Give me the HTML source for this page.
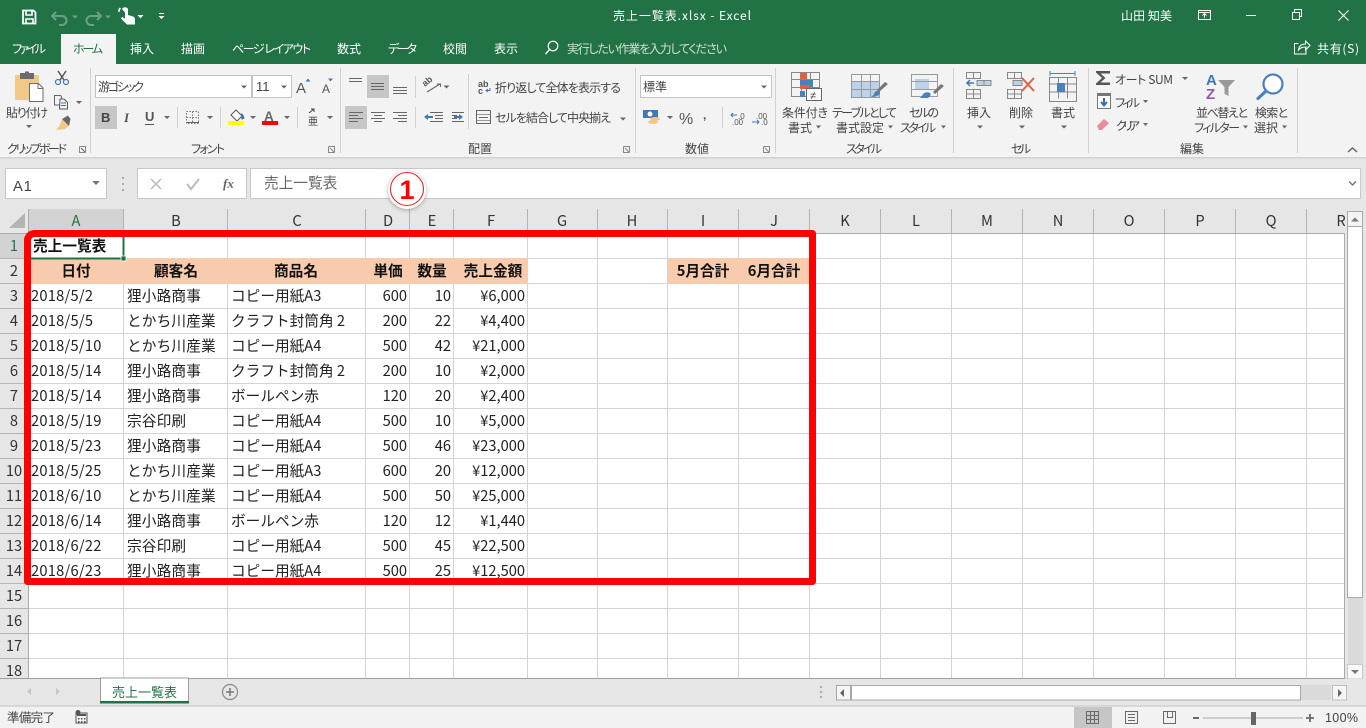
<!DOCTYPE html>
<html lang="ja"><head><meta charset="utf-8"><title>売上一覧表.xlsx - Excel</title>
<style>
html,body{margin:0;padding:0;width:1366px;height:728px;overflow:hidden;background:#e6e6e6}
svg{display:block;position:absolute;left:0;top:0}
text{font-family:"Liberation Sans","Noto Sans CJK JP",sans-serif;font-size:12px;fill:#444}
.j text,text.j{font-family:"Noto Sans CJK JP","Liberation Sans",sans-serif;font-feature-settings:"palt"}
.w text{fill:#fff}
.c text{font-family:"Noto Sans CJK JP","Liberation Sans",sans-serif;font-size:14.67px;fill:#222}
.c text[x="31"]{letter-spacing:.25px}
.c text[x="127"]{letter-spacing:.15px}
.b text{font-weight:700;text-anchor:middle;fill:#111}
.r text{text-anchor:end}
.h text{font-family:"Noto Sans CJK JP",sans-serif;font-size:14.67px;fill:#333;text-anchor:middle}
</style></head><body>
<svg width="1366" height="728" viewBox="0 0 1366 728" xmlns="http://www.w3.org/2000/svg">
<!-- base -->
<rect width="1366" height="728" fill="#e6e6e6"/>
<rect width="1366" height="64" fill="#217346"/>
<rect y="64" width="1366" height="93" fill="#f3f3f3"/>
<rect y="157" width="1366" height="1.5" fill="#d2d2d2"/>
<rect x="61" y="34" width="55" height="30" fill="#f3f3f3"/>

<!-- title bar -->
<g class="j w">
<text x="613" y="20" textLength="138">売上一覧表.xlsx  -  Excel</text>
<text x="1121" y="20" textLength="51">山田 知美</text>
<text x="12" y="53" textLength="34">ファイル</text>
<text x="130" y="53" textLength="24">挿入</text>
<text x="181" y="53" textLength="24">描画</text>
<text x="232" y="53" textLength="79">ページ レイアウト</text>
<text x="337" y="53" textLength="24">数式</text>
<text x="388" y="53" textLength="29">データ</text>
<text x="443" y="53" textLength="24">校閲</text>
<text x="494" y="53" textLength="24">表示</text>
<text x="567" y="53" textLength="160" style="fill:#cfe0d6">実行したい作業を入力してください</text>
<text x="1317" y="53" textLength="42">共有(S)</text>
</g>
<text class="j" x="73" y="53" textLength="30" style="fill:#217346">ホーム</text>

<!-- QAT -->
<g fill="none" stroke="#fff">
<path d="M23 10.500h10.500l2 2v11h-12.500z" stroke-width="1.800"/>
<path d="M26 11v4h6v-4M26 23.500v-4.500h7v4.500" stroke-width="1.600"/>
<path d="M53 16h9a4.500 4.500 0 0 1 0 9h-3M56 12l-4 4 4 4" stroke="#6aa184" stroke-width="2"/>
<path d="M100 16h-9a4.500 4.500 0 0 0 0 9h3M97 12l4 4-4 4" stroke="#6aa184" stroke-width="2"/>
</g>
<path d="M122 9a3.500 3.500 0 0 1 6 0v6l5 1.500c1.500.5 2 1.500 2 3v5h-8l-6-6 1-1.500 3 1.500v-6z M118.500 12a4 4 0 0 1 1.500-4.500l1 1.300a2.500 2.500 0 0 0-1 3z" fill="#fff"/>
<path d="M72 15.500h6l-3 3zM105 15.500h6l-3 3z" fill="#6aa184"/>
<path d="M137.500 15h6l-3 3.500z M159 13h5v1h-5z M158.500 16h6l-3 3z" fill="#fff"/>

<!-- window buttons -->
<g fill="none" stroke="#fff" stroke-width="1">
<path d="M1198.500 10.500h12v9h-12zM1198.500 12.500h12M1204.500 18v-4.500M1202.500 15.500l2-2 2 2"/>
<path d="M1246 15.500h10"/>
<path d="M1292.500 12.500h7v7h-7zM1294.500 12v-2.500h7v7h-2"/>
<path d="M1338.500 10.500l10 10M1348.500 10.500l-10 10" stroke-width="1.100"/>
<circle cx="553" cy="46" r="4.800" stroke-width="1.200"/>
<path d="M549.500 49.500l-4 4.500" stroke-width="1.400"/>
<path d="M1306 46.500v7.500h-11.500v-10.500h4M1298.500 50c.5-4 3-6 7-6v-3l4.500 4.500-4.500 4.500v-3c-3 0-5.500 1-7 3z"/>
</g>

<!-- ribbon separators -->
<g fill="none" stroke="#d0d0d0">
<path d="M90.500 68v85M340.500 68v85M635.500 68v85M775.500 68v85M953.500 68v85M1088.500 68v85M1297.500 68v85"/>
<path d="M415.500 76v22M415.500 107v21M468.500 74v55M177.500 107v21M220.500 107v21M297.500 107v21M722.500 107v21"/>
</g>

<!-- clipboard -->
<rect x="15" y="75" width="24" height="25" rx="1" fill="#f0c986"/>
<rect x="20" y="73" width="14" height="6" fill="#6b6b6b"/>
<rect x="25" y="71.500" width="4" height="3" fill="#6b6b6b"/>
<path d="M29.500 83.500h9l4.500 4.500v13.500h-13.500z" fill="#fff" stroke="#6b6b6b"/>
<path d="M38 83.500v5h5" fill="none" stroke="#6b6b6b"/>
<g fill="none" stroke="#555" stroke-width="1.200">
<path d="M58 71l6 9M66 71l-6 9" stroke-width="1.500"/>
<circle cx="58" cy="82" r="2.500" stroke="#3f78b5"/><circle cx="66" cy="82" r="2.500" stroke="#3f78b5"/>
<path d="M54.500 95.500h6l1 1v3h3l3 3v6.500h-8v-4h-5z" stroke="#666" stroke-width="1"/>
<path d="M60 99h4l3.500 3.500v6.500h-8z" fill="#f3f3f3" stroke="#5a5a5a" stroke-width="1"/>
<path d="M61 103h5M61 105.500h5" stroke="#3f78b5" stroke-width="1"/>
</g>
<path d="M62 119l7 7-3 2.500c-2 1-6 1.500-10.500 1 2-1 3.500-3 4-4z" fill="#f0c986"/>
<path d="M62 119l6-3.500 2.500 3.500-1.500 7z" fill="#666"/>
<path d="M76 101h6l-3 3zM26 125h6l-3 3z" fill="#666"/>
<text class="j" x="6" y="117" textLength="42">貼り付け</text>
<text class="j" x="7" y="153" textLength="60">クリップボード</text>
<g fill="none" stroke="#888"><path d="M79.500 146.500h6v6M79.500 146.500v6h6"/><path d="M81 148l4 4" stroke="#666"/>
<path d="M328.500 146.500h6v6M328.500 146.500v6h6M330 148l4 4"/><path d="M623.500 146.500h6v6M623.500 146.500v6h6M625 148l4 4"/><path d="M763.500 146.500h6v6M763.500 146.500v6h6M765 148l4 4"/></g>

<!-- font group -->
<rect x="95.500" y="75.500" width="156" height="22" fill="#fff" stroke="#c2c2c2"/>
<rect x="252.500" y="75.500" width="39" height="22" fill="#fff" stroke="#c2c2c2"/>
<text class="j" x="98" y="91" textLength="46">游ゴシック</text>
<text x="256" y="91" style="font-size:13px">11</text>
<path d="M241 85.500h6l-3 3zM281 85.500h6l-3 3z" fill="#666"/>
<text x="296" y="93" style="font-size:15px;fill:#555">A</text><text x="322" y="93" style="font-size:12px;fill:#555">A</text>
<path d="M305.500 81.500h5l-2.500-3zM328 78.500h5l-2.500 3z" fill="#3f78b5"/>
<rect x="95" y="106" width="22" height="23" fill="#c6c6c6"/>
<text x="101" y="122" style="font-size:13px;font-weight:700;fill:#444">B</text>
<text x="124" y="122" style="font-size:13px;font-style:italic;font-family:'Liberation Serif',serif;font-weight:700;fill:#555">I</text>
<text x="145" y="121" style="font-size:13px;font-weight:700;fill:#555">U</text><path d="M145 124.500h9" stroke="#555"/>
<g fill="#666"><path d="M164 116h6l-3 3zM207 116h6l-3 3zM250 116h6l-3 3zM284 116h6l-3 3zM327 116h6l-3 3z"/></g>
<g fill="none" stroke="#777" stroke-dasharray="1.500 1.500"><path d="M186.500 111.500h12v12h-12zM192.500 111.500v12M186.500 117.500h12"/></g>
<path d="M186 122.500h13" stroke="#666"/>
<path d="M236 110l6 6-5 5-6-6z M242 114l2 4-2 1z" fill="#fff" stroke="#555"/>
<path d="M241 113l3 3 0 3-3-1z" fill="#3f78b5"/>
<rect x="228" y="121" width="16" height="4" fill="#ffff00"/>
<text x="264" y="121" style="font-size:13.500px;font-weight:700;fill:#666">A</text>
<rect x="262" y="121" width="16" height="4" fill="#f00"/>
<text class="j" x="308" y="125" style="font-size:10px;fill:#444">亜</text>
<path d="M309 113l5-4M311 109h3v3" stroke="#444" fill="none"/>
<text class="j" x="191" y="153" textLength="34">フォント</text>

<!-- alignment -->
<rect x="367" y="75" width="22" height="23" fill="#c6c6c6"/>
<rect x="345" y="106" width="22" height="23" fill="#c6c6c6"/>
<g fill="none" stroke="#666">
<path d="M349 78.500h13M349 81.500h13M371 83.500h13M371 86.500h13M371 89.500h13M393 87.500h14M393 90.500h14M393 93.500h14"/>
<path d="M349 112.500h14M349 115.500h9M349 118.500h14M349 121.500h9"/>
<path d="M371 112.500h14M374 115.500h8M371 118.500h14M374 121.500h8"/>
<path d="M393 112.500h14M398 115.500h9M393 118.500h14M398 121.500h9"/>
<path d="M430 112.500h13M435 115.500h8M435 118.500h8M430 121.500h13M452 112.500h12M452 115.500h5M452 118.500h5M452 121.500h12"/>
<path d="M427 92l13-8M437 84h3.500v3" stroke-width="1.100"/>
</g>
<text x="425" y="87" transform="rotate(-40 425 87)" style="font-size:9px;font-weight:700;fill:#555">ab</text>
<path d="M424 117l4-3v2h5v2h-5v2zM463 117l-4-3v2h-5v2h5v2z" fill="#3f78b5"/>
<path d="M443.500 85.500h6l-3 3zM620 117.500h6l-3 3z" fill="#666"/>
<text x="478" y="87" style="font-size:9px;fill:#555;font-weight:700">ab</text><text x="478" y="94" style="font-size:9px;fill:#555;font-weight:700">c</text>
<path d="M490 88v2.500h-3M488 89l-2 1.500 2 1.500" fill="none" stroke="#3f78b5"/>
<text class="j" x="495" y="92" textLength="126">折り返して全体を表示する</text>
<rect x="476.500" y="110.500" width="14" height="13" fill="none" stroke="#666"/>
<path d="M477 114.500h13M477 120.500h13" stroke="#999"/>
<path d="M479 117.500h9" stroke="#3f78b5"/>
<text class="j" x="495" y="122" textLength="116">セルを結合して中央揃え</text>
<text class="j" x="468" y="153" textLength="24">配置</text>

<!-- number -->
<rect x="640.500" y="75.500" width="131" height="22" fill="#fff" stroke="#c2c2c2"/>
<text class="j" x="643" y="91" textLength="24">標準</text>
<path d="M761 85.500h6l-3 3zM667 116h6l-3 3z" fill="#666"/>
<rect x="643" y="110" width="15" height="8" fill="#3f78b5"/><circle cx="650" cy="114" r="2.500" fill="#fff"/>
<ellipse cx="655" cy="119" rx="5" ry="2" fill="#f0c986"/><ellipse cx="653" cy="122" rx="5" ry="2" fill="#f0c986"/>
<text x="679" y="124" style="font-size:16px;fill:#555">%</text>
<text x="703" y="119" style="font-size:12px;font-weight:700;fill:#555">,</text>
<text x="738" y="119" style="font-size:8px;fill:#555">.0</text><text x="732" y="125" style="font-size:8px;fill:#555">.00</text>
<text x="756" y="119" style="font-size:8px;fill:#555">.00</text><text x="761" y="125" style="font-size:8px;fill:#555">.0</text>
<path d="M731 115h6M733 113l-2 2 2 2M752 122h7M757 120l2 2-2 2" fill="none" stroke="#3f78b5"/>
<text class="j" x="685" y="153" textLength="24">数値</text>

<!-- styles -->
<rect x="852" y="82" width="27" height="15" fill="#bcd2ea"/>
<rect x="915" y="79" width="14" height="11" fill="#bcd2ea"/>
<g fill="none" stroke="#888">
<path d="M791.500 72.500h28v24h-28zM791.500 79.500h28M791.500 87.500h28M801.500 72.500v24M810.500 72.500v24"/>
<path d="M851.500 74.500h28v23h-28zM851.500 81.500h28M851.500 89.500h28M861.500 74.500v23M870.500 74.500v23" stroke="#999"/>
<path d="M911.500 74.500h26v22h-26zM911.500 81.500h26M911.500 89.500h26" stroke="#999"/>
</g>
<rect x="800" y="73" width="7" height="6" fill="#e2613d"/><rect x="800" y="80" width="13" height="7" fill="#4a81bd"/><rect x="800" y="85" width="10" height="4" fill="#e2613d"/><rect x="800" y="91" width="5" height="6" fill="#4a81bd"/>
<rect x="806.500" y="88.500" width="15" height="12" fill="#fff" stroke="#666"/>
<text x="810" y="99" style="font-size:11px;fill:#444">≠</text>
<path d="M885 82l-8 8 2 2 9-8z" fill="#777"/><path d="M875 92c2-2 5-1 5 1-1 3-5 4-9 4 2-1 3-3 4-5z" fill="#4a81bd"/>
<path d="M941 84l-8 8 2 2 9-8z" fill="#777"/><path d="M922 96c1-3 5-5 8-3 2 2-1 5-3 5h-7z" fill="#4a81bd"/>
<text class="j" x="782" y="117" textLength="46">条件付き</text>
<text class="j" x="788" y="132" textLength="24">書式</text>
<text class="j" x="832" y="117" textLength="65">テーブルとして</text>
<text class="j" x="836" y="132" textLength="48">書式設定</text>
<text class="j" x="909" y="117" textLength="30">セルの</text>
<text class="j" x="900" y="132" textLength="36">スタイル</text>
<path d="M816 125.500h5l-2.500 3zM888 125.500h5l-2.500 3zM941 125.500h5l-2.500 3z" fill="#666"/>
<text class="j" x="846" y="153" textLength="36">スタイル</text>

<!-- cells group -->
<g fill="none" stroke="#888">
<path d="M966.500 72.500h14v6h-14zM973.500 72.500v6M966.500 89.500h14v9h-14zM966.500 94h14M973.500 89.500v9"/>
<path d="M1007.500 72.500h14v6h-14zM1014.500 72.500v6M1007.500 89.500h14v9h-14zM1007.500 94h14M1014.500 89.500v9"/>
<path d="M1049.500 77.500h27v24h-27zM1049.500 84h27M1049.500 92h27M1058.500 77.500v21M1067.500 77.500v21"/>
</g>
<rect x="977" y="80.500" width="14" height="5" fill="#bcd2ea" stroke="#888"/><path d="M977 80.500v5M984 80.500v5" stroke="#888"/>
<path d="M967 83h7M970 80l-3 3 3 3" fill="none" stroke="#3f78b5" stroke-width="1.500"/>
<rect x="1013" y="80.500" width="9" height="5" fill="#bcd2ea" stroke="#888"/>
<path d="M1022 78l12 13M1034 78l-12 13" stroke="#e2613d" stroke-width="2"/>
<rect x="1057" y="83" width="8" height="9" fill="#4a81bd"/>
<path d="M1050 73.500h25M1050 71v5M1075 71v5" fill="none" stroke="#4a81bd"/>
<text class="j" x="967" y="117" textLength="24">挿入</text>
<text class="j" x="1009" y="117" textLength="24">削除</text>
<text class="j" x="1051" y="117" textLength="24">書式</text>
<path d="M977 125.500h6l-3 3zM1019 125.500h6l-3 3zM1061 125.500h6l-3 3z" fill="#666"/>
<text class="j" x="1011" y="153" textLength="20">セル</text>

<!-- editing -->
<path d="M1096 71h14v2.500h-9.500l5 4.500-5 4.500h9.500v2.500h-14v-1.500l6-5.500-6-5.500z" fill="#555"/>
<text class="j" x="1115" y="84" textLength="58">オート SUM</text>
<path d="M1182 77h6l-3 3zM1143 100h5l-2.500 3zM1143 123h5l-2.500 3z" fill="#666"/>
<rect x="1097.500" y="93.500" width="13" height="15" fill="#fff" stroke="#777"/><rect x="1097" y="93" width="14" height="3" fill="#777"/>
<path d="M1104 98v7M1101 102l3 3.500 3-3.500" fill="none" stroke="#2f72b5" stroke-width="2"/>
<text class="j" x="1115" y="107" textLength="25">フィル</text>
<path d="M1097 126l7-7 5 4-7 7h-3z" fill="#e98d9d"/>
<text class="j" x="1116" y="130" textLength="24">クリア</text>
<text x="1206" y="85" style="font-size:15px;font-weight:700;fill:#3f78b5">A</text>
<text x="1206" y="99" style="font-size:15px;font-weight:700;fill:#9359b0">Z</text>
<path d="M1218 80h17l-6.500 7v9l-4-2v-7z" fill="#999"/>
<circle cx="1273" cy="84" r="9.500" fill="#fff" stroke="#4a81bd" stroke-width="2.200"/>
<path d="M1266 91l-8 7.500" stroke="#4a81bd" stroke-width="3.200" stroke-linecap="round"/>
<text class="j" x="1196" y="117" textLength="52">並べ替えと</text>
<text class="j" x="1194" y="132" textLength="46">フィルター</text>
<text class="j" x="1255" y="117" textLength="33">検索と</text>
<text class="j" x="1254" y="132" textLength="24">選択</text>
<path d="M1243 125.500h5l-2.500 3zM1282 125.500h5l-2.500 3z" fill="#666"/>
<text class="j" x="1180" y="153" textLength="24">編集</text>
<path d="M1348 152l4.500-4 4.500 4" fill="none" stroke="#666" stroke-width="1.500"/>

<!-- formula bar -->
<rect x="5.500" y="168.500" width="101" height="30" fill="#fff" stroke="#c8c8c8"/>
<text x="13" y="191" style="font-size:14.670px;fill:#444;letter-spacing:.8px">A1</text>
<path d="M92 181h8l-4 4z" fill="#777"/>
<path d="M122 177h2v2h-2zM122 183h2v2h-2zM122 189h2v2h-2z" fill="#aaa"/>
<rect x="137.500" y="168.500" width="109" height="30" fill="#fff" stroke="#c8c8c8"/>
<rect x="250.500" y="168.500" width="1110" height="30" fill="#fff" stroke="#c8c8c8"/>
<path d="M151 179l10 10M161 179l-10 10" stroke="#bbb" stroke-width="1.500"/>
<path d="M187 184l4 5 8-10" fill="none" stroke="#bbb" stroke-width="2"/>
<text x="223" y="188" style="font-family:'Liberation Serif',serif;font-size:13px;font-style:italic;font-weight:700;fill:#666">fx</text>
<text class="j" x="264" y="188" style="font-size:14.670px;font-feature-settings:normal;fill:#666">売上一覧表</text>
<path d="M1349 181.500l3.500 3.500 3.500-3.500" fill="none" stroke="#777" stroke-width="1.500"/>

<!-- grid -->
<rect x="0" y="209" width="1345" height="25" fill="#e6e6e6"/>
<rect x="29" y="209" width="94" height="24" fill="#d2d2d2"/>
<rect x="0" y="234" width="28" height="24" fill="#d2d2d2"/>
<rect x="29" y="234" width="1316" height="444" fill="#fff"/>
<path d="M25 213v15H9z" fill="#b4b4b4"/>
<path d="M0 233.500h1345M28.500 209v469" stroke="#ababab" fill="none"/>
<path d="M123.500 209v24M227.500 209v24M365.500 209v24M409.500 209v24M453.500 209v24M527.500 209v24M597.500 209v24M667.500 209v24M738.500 209v24M809.500 209v24M880.500 209v24M951.500 209v24M1022.500 209v24M1093.500 209v24M1164.500 209v24M1235.500 209v24M1306.500 209v24" stroke="#b4b4b4" fill="none"/>
<path d="M0 258.500h28M0 283.500h28M0 308.500h28M0 333.500h28M0 358.500h28M0 383.500h28M0 408.500h28M0 433.500h28M0 458.500h28M0 483.500h28M0 508.500h28M0 533.500h28M0 558.500h28M0 583.500h28M0 608.500h28M0 633.500h28M0 658.500h28" stroke="#b4b4b4" fill="none"/>
<path d="M29 258.500h1316M29 283.500h1316M29 308.500h1316M29 333.500h1316M29 358.500h1316M29 383.500h1316M29 408.500h1316M29 433.500h1316M29 458.500h1316M29 483.500h1316M29 508.500h1316M29 533.500h1316M29 558.500h1316M29 583.500h1316M29 608.500h1316M29 633.500h1316M29 658.500h1316" stroke="#d4d4d4" fill="none"/>
<path d="M123.500 234v444M227.500 234v444M365.500 234v444M409.500 234v444M453.500 234v444M527.500 234v444M597.500 234v444M667.500 234v444M738.500 234v444M809.500 234v444M880.500 234v444M951.500 234v444M1022.500 234v444M1093.500 234v444M1164.500 234v444M1235.500 234v444M1306.500 234v444" stroke="#d4d4d4" fill="none"/>
<rect x="29" y="258" width="499" height="26" fill="#f8cbad"/>
<rect x="668" y="258" width="142" height="26" fill="#f8cbad"/>
<path d="M1344.500 234v444" stroke="#ababab"/>

<!-- headers -->
<g class="h">
<text x="76" y="226" style="fill:#217346">A</text><text x="176" y="226">B</text><text x="297" y="226">C</text><text x="388" y="226">D</text><text x="432" y="226">E</text><text x="491" y="226">F</text><text x="562" y="226">G</text><text x="632" y="226">H</text><text x="703" y="226">I</text><text x="774" y="226">J</text><text x="845" y="226">K</text><text x="916" y="226">L</text><text x="987" y="226">M</text><text x="1058" y="226">N</text><text x="1129" y="226">O</text><text x="1200" y="226">P</text><text x="1271" y="226">Q</text><text x="1341" y="226">R</text>
<text x="14" y="251" style="fill:#217346">1</text><text x="14" y="276">2</text><text x="14" y="301">3</text><text x="14" y="326">4</text><text x="14" y="351">5</text><text x="14" y="376">6</text><text x="14" y="401">7</text><text x="14" y="426">8</text><text x="14" y="451">9</text><text x="14" y="476">10</text><text x="14" y="501">11</text><text x="14" y="526">12</text><text x="14" y="551">13</text><text x="14" y="576">14</text><text x="14" y="601">15</text><text x="14" y="626">16</text><text x="14" y="651">17</text><text x="14" y="676">18</text>
</g>

<!-- cells -->
<g class="c">
<text x="33" y="251" style="font-weight:700;fill:#111">売上一覧表</text>
<g class="b"><text x="76" y="276">日付</text><text x="176" y="276">顧客名</text><text x="296" y="276">商品名</text><text x="388" y="276">単価</text><text x="432" y="276">数量</text><text x="493" y="276">売上金額</text><text x="703" y="276">5月合計</text><text x="774" y="276">6月合計</text></g>
<text x="31" y="301">2018/5/2</text><text x="127" y="301">狸小路商事</text><text x="231" y="301">コピー用紙A3</text>
<text x="31" y="326">2018/5/5</text><text x="127" y="326">とかち川産業</text><text x="231" y="326">クラフト封筒角 2</text>
<text x="31" y="351">2018/5/10</text><text x="127" y="351">とかち川産業</text><text x="231" y="351">コピー用紙A4</text>
<text x="31" y="376">2018/5/14</text><text x="127" y="376">狸小路商事</text><text x="231" y="376">クラフト封筒角 2</text>
<text x="31" y="401">2018/5/14</text><text x="127" y="401">狸小路商事</text><text x="231" y="401">ボールペン赤</text>
<text x="31" y="426">2018/5/19</text><text x="127" y="426">宗谷印刷</text><text x="231" y="426">コピー用紙A4</text>
<text x="31" y="451">2018/5/23</text><text x="127" y="451">狸小路商事</text><text x="231" y="451">コピー用紙A4</text>
<text x="31" y="476">2018/5/25</text><text x="127" y="476">とかち川産業</text><text x="231" y="476">コピー用紙A3</text>
<text x="31" y="501">2018/6/10</text><text x="127" y="501">とかち川産業</text><text x="231" y="501">コピー用紙A4</text>
<text x="31" y="526">2018/6/14</text><text x="127" y="526">狸小路商事</text><text x="231" y="526">ボールペン赤</text>
<text x="31" y="551">2018/6/22</text><text x="127" y="551">宗谷印刷</text><text x="231" y="551">コピー用紙A4</text>
<text x="31" y="576">2018/6/23</text><text x="127" y="576">狸小路商事</text><text x="231" y="576">コピー用紙A4</text>
<g class="r">
<text x="407" y="301">600</text><text x="451" y="301">10</text><text x="525" y="301">¥6,000</text>
<text x="407" y="326">200</text><text x="451" y="326">22</text><text x="525" y="326">¥4,400</text>
<text x="407" y="351">500</text><text x="451" y="351">42</text><text x="525" y="351">¥21,000</text>
<text x="407" y="376">200</text><text x="451" y="376">10</text><text x="525" y="376">¥2,000</text>
<text x="407" y="401">120</text><text x="451" y="401">20</text><text x="525" y="401">¥2,400</text>
<text x="407" y="426">500</text><text x="451" y="426">10</text><text x="525" y="426">¥5,000</text>
<text x="407" y="451">500</text><text x="451" y="451">46</text><text x="525" y="451">¥23,000</text>
<text x="407" y="476">600</text><text x="451" y="476">20</text><text x="525" y="476">¥12,000</text>
<text x="407" y="501">500</text><text x="451" y="501">50</text><text x="525" y="501">¥25,000</text>
<text x="407" y="526">120</text><text x="451" y="526">12</text><text x="525" y="526">¥1,440</text>
<text x="407" y="551">500</text><text x="451" y="551">45</text><text x="525" y="551">¥22,500</text>
<text x="407" y="576">500</text><text x="451" y="576">25</text><text x="525" y="576">¥12,500</text>
</g></g>

<!-- selection -->
<path d="M30 258.500h93.500V234" fill="none" stroke="#217346" stroke-width="2"/>
<rect x="121" y="256" width="5" height="5" fill="#217346" stroke="#fff" stroke-width=".8"/>

<!-- red frame -->
<path d="M27.500 241a7 7 0 0 1 7-7.500H812.500V581.500H27.500z" fill="none" stroke="#f00" stroke-width="7" stroke-linejoin="round"/>

<!-- circle 1 -->
<circle cx="407" cy="190" r="19" fill="#fff" style="filter:drop-shadow(0 1px 2px rgba(0,0,0,.3))"/>
<circle cx="407" cy="189" r="16.500" fill="#fff" stroke="#e8272a" stroke-width="1.100"/>
<text x="407" y="199" text-anchor="middle" style="font-size:27px;font-weight:700;fill:#f00">1</text>

<!-- vertical scrollbar -->
<rect x="1345" y="209" width="21" height="470" fill="#e6e6e6"/>
<rect x="1348" y="227" width="15" height="438" fill="#dadada"/>
<rect x="1347.500" y="211.500" width="15" height="15" fill="#f4f4f4" stroke="#a8a8a8"/>
<path d="M1351 221.500h8l-4-4z" fill="#777"/>
<rect x="1347.500" y="226.500" width="15" height="371" fill="#fff" stroke="#a8a8a8"/>
<rect x="1347.500" y="664.500" width="15" height="14.500" fill="#f9f9f9" stroke="#c8c8c8"/>
<path d="M1351 670h8l-4 4z" fill="#777"/>

<!-- sheet bar -->
<path d="M0 678.500h1345" stroke="#9e9e9e"/>
<rect x="0" y="679" width="1366" height="27" fill="#e6e6e6"/>
<path d="M31 688l-4 3.500 4 3.500zM56 688l4 3.500-4 3.500z" fill="#c4c4c4"/>
<path d="M100.500 702v-24h88v24" fill="#fff" stroke="#9e9e9e"/>
<rect x="100" y="701" width="89" height="2.500" fill="#217346"/>
<text class="j" x="112" y="697" style="font-size:13px;font-feature-settings:normal;fill:#217346">売上一覧表</text>
<circle cx="230" cy="692" r="7.500" fill="none" stroke="#8a8a8a" stroke-width="1.200"/>
<path d="M226 692h8M230 688v8" stroke="#777" stroke-width="1.500"/>
<path d="M820 686h2v2h-2zM820 691h2v2h-2zM820 696h2v2h-2z" fill="#aaa"/>
<rect x="836.500" y="685.500" width="14" height="14.500" fill="#f6f6f6" stroke="#a8a8a8"/>
<path d="M844 689l-4 4 4 4z" fill="#666"/>
<rect x="851.500" y="685.500" width="449" height="14.500" fill="#fff" stroke="#a8a8a8"/>
<rect x="1301" y="685" width="30" height="15" fill="#dadada"/>
<rect x="1332.500" y="685.500" width="14" height="14.500" fill="#f6f6f6" stroke="#bdbdbd"/>
<path d="M1338 689l4 4-4 4z" fill="#666"/>

<!-- status bar -->
<rect x="0" y="706" width="1366" height="22" fill="#f2f2f2"/>
<path d="M0 706h1366" stroke="#d0d0d0" stroke-width="1.500"/>
<text class="j" x="7" y="722" textLength="48" style="font-size:12.500px;font-feature-settings:normal">準備完了</text>
<rect x="76" y="713" width="11" height="10" fill="none" stroke="#555"/>
<path d="M77 714h9v2h-9zM78 718h1.500v1.500H78zM81 718h1.500v1.500H81zM84 718h1.500v1.500H84zM78 721h1.500v1.500H78zM81 721h1.500v1.500H81zM84 721h1.500v1.500H84z" fill="#555"/>
<circle cx="78" cy="712.500" r="2.500" fill="#555"/>
<rect x="1074" y="707" width="38" height="21" fill="#c6c6c6"/>
<g fill="none" stroke="#6a6a6a"><path d="M1086.500 711.500h12v12h-12zM1086.500 715.500h12M1086.500 719.500h12M1090.500 711.500v12M1094.500 711.500v12"/>
<path d="M1125.500 711.500h12v12h-12zM1128 714.500h7M1128 717.500h7M1128 720.500h7"/>
<path d="M1163.500 711.500h12v12h-12zM1167.500 711.500v6h5v-6"/>
</g>
<rect x="1193" y="717" width="6" height="2" fill="#6a6a6a"/>
<rect x="1203" y="717.500" width="100" height="1" fill="#a8a8a8"/>
<rect x="1251" y="712" width="5" height="13" fill="#666"/>
<path d="M1306 718h8M1310 714v8" stroke="#6a6a6a" stroke-width="1.800"/>
<text x="1325" y="722" textLength="33" style="font-size:12.500px;fill:#444">100%</text>
</svg>
</body></html>
